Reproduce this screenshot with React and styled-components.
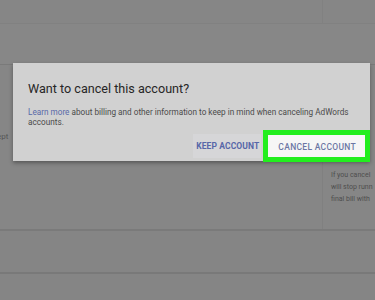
import React from 'react'
import styled, { createGlobalStyle } from 'styled-components'

const GlobalStyle = createGlobalStyle`
    html, body {
        margin: 0;
        padding: 0;
        background: #858585;
    }
    body {
        font-family: Roboto, "Liberation Sans", Arial, sans-serif;
        overflow: hidden;
    }
`

export default function App() {
    return (
        <Screen>
            <GlobalStyle />
            <Page>
                <TopBar>
                    <TopMain />
                    <TopSide />
                </TopBar>
                <Header />
                <Section>
                    <MainCol>
                        <CutText>ept</CutText>
                    </MainCol>
                    <SideCol>
                        <SideNote>
                            If you cancel<br />
                            will stop runn<br />
                            final bill with
                        </SideNote>
                    </SideCol>
                </Section>
                <Row $height={41} />
                <Row $height={30} />
            </Page>
            <Dialog>
                <Title>Want to cancel this account?</Title>
                <Body>
                    <Link>Learn more</Link> about billing and other information to keep in mind when canceling AdWords accounts.
                </Body>
                <Actions>
                    <FlatButton>Keep account</FlatButton>
                    <Highlight>
                        <FlatButton $primary>Cancel account</FlatButton>
                    </Highlight>
                </Actions>
            </Dialog>
        </Screen>
    )
}

const Screen = styled.div`
    position: relative;
    width: 375px;
    height: 300px;
    overflow: hidden;
    background: #868686;
`
const Page = styled.div`
    display: flex;
    flex-direction: column;
`
const TopBar = styled.div`
    display: grid;
    grid-template-columns: 322px 1fr;
    height: 23px;
    border-bottom: 1px solid #818181;
`
const TopMain = styled.div``
const TopSide = styled.div`
    border-left: 1px solid #818181;
`
const Header = styled.div`
    height: 40px;
    background: #878787;
    border-bottom: 1px solid #7a7a7a;
`
const Section = styled.div`
    display: grid;
    grid-template-columns: 322px 1fr;
    height: 164px;
    border-bottom: 2px solid #7a7a7a;
`
const MainCol = styled.div`
    padding-top: 67px;
`
const CutText = styled.div`
    font-size: 8px;
    color: #555;
    margin-left: -3px;
`
const SideCol = styled.div`
    display: flex;
    padding: 104px 0 12px 8px;
    border-left: 1px solid #808080;
`
const SideNote = styled.div`
    font-size: 7px;
    line-height: 12px;
    color: #4e4e4e;
    white-space: nowrap;
`
const Row = styled.div`
    height: ${p => p.$height}px;
    border-bottom: 2px solid #797979;
    background: #858585;
`
const Dialog = styled.div`
    position: absolute;
    left: 13px;
    top: 63px;
    width: 357px;
    height: 98px;
    box-sizing: border-box;
    background: #d1d1d1;
    box-shadow: 0 2px 4px rgba(0, 0, 0, 0.35);
    padding: 18px 15px 0 15px;
    display: flex;
    flex-direction: column;
`
const Title = styled.div`
    font-size: 12.6px;
    color: #262626;
    line-height: 16px;
`
const Body = styled.div`
    margin-top: 10px;
    font-size: 8.2px;
    line-height: 10px;
    color: #4a4a4a;
`
const Link = styled.span`
    color: #5868a8;
`
const Actions = styled.div`
    display: flex;
    justify-content: flex-end;
    align-items: center;
    margin-top: auto;
    margin-right: -15px;
    margin-bottom: -1px;
`
const Highlight = styled.div`
    margin-left: 2px;
    border: 5px solid #22ee1e;
    background: #f6f6f6;
    display: flex;
`
const FlatButton = styled.button`
    border: none;
    background: ${p => (p.$primary ? '#f6f6f6' : '#d6d6d8')};
    color: ${p => (p.$primary ? '#6c76a4' : '#5767a8')};
    font-family: Roboto, "Liberation Sans", Arial, sans-serif;
    font-weight: ${p => (p.$primary ? 500 : 700)};
    font-size: 8.5px;
    letter-spacing: ${p => (p.$primary ? '0.3px' : '0.1px')};
    text-transform: uppercase;
    padding: ${p => (p.$primary ? '7px 9px 6px 10px' : '7px 2px 7px 3px')};
    height: ${p => (p.$primary ? '22px' : '24px')};
    line-height: 10px;
`
